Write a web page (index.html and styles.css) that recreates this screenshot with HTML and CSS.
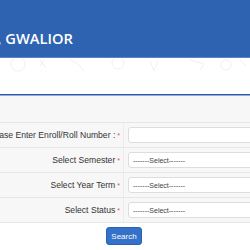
FILE: index.html
```html
<!DOCTYPE html>
<html lang="en">
<head>
    <meta charset="UTF-8">
    <meta name="viewport" content="width=device-width, initial-scale=1.0">
    <title>Result</title>
    <link rel="stylesheet" href="styles.css">
</head>
<body>
    <div class="header">
        <div class="title"><span>JIWAJI UNIVERSITY, GWALIOR</span></div>
    </div>
    <div class="doodles">
        <svg width="250" height="20" viewBox="0 0 250 20">
            <g fill="none" stroke="#f0f0f0" stroke-width="1">
                <circle cx="18" cy="6" r="7"/>
                <path d="M40 2 l6 8 M44 2 l-4 6"/>
                <path d="M70 1 q8 4 14 12"/>
                <circle cx="118" cy="5" r="6"/>
                <path d="M150 3 l4 10 l4 -10"/>
                <path d="M190 2 l14 4 l-4 6"/>
                <circle cx="226" cy="7" r="5"/>
                <path d="M240 2 l6 6"/>
            </g>
        </svg>
    </div>
    <div class="rule"></div>
    <form class="panel">
        <div class="panel-head"></div>
        <div class="row">
            <div class="label"><span>Please Enter Enroll/Roll Number :</span><i>*</i></div>
            <div class="field"><input type="text" class="box"></div>
        </div>
        <div class="row">
            <div class="label"><span>Select Semester</span><i>*</i></div>
            <div class="field"><div class="box">-------Select-------</div></div>
        </div>
        <div class="row">
            <div class="label"><span>Select Year Term</span><i>*</i></div>
            <div class="field"><div class="box">-------Select-------</div></div>
        </div>
        <div class="row">
            <div class="label"><span>Select Status</span><i>*</i></div>
            <div class="field"><div class="box">-------Select-------</div></div>
        </div>
        <div class="actions">
            <button type="button">Search</button>
        </div>
    </form>
</body>
</html>
```

FILE: styles.css
```css
body {
    margin: 0;
    padding: 0;
    font-family: "Liberation Sans", Arial, sans-serif;
    background-color: #fff;
    overflow: hidden;
}

.header {
    height: 57px;
    background-color: #2e63b2;
    border-bottom: 1px solid #5a86c8;
    display: flex;
    align-items: center;
}

.title {
    width: 73px;
    display: flex;
    justify-content: flex-end;
    overflow: hidden;
    white-space: nowrap;
    color: #fff;
    font-family: "Open Sans", sans-serif;
    font-weight: 600;
    font-size: 14.7px;
    padding-top: 18px;
}

.doodles {
    height: 20px;
}

.doodles svg {
    display: block;
}

.rule {
    margin-top: 16px;
    height: 1px;
    background-color: #2a59a6;
    border-bottom: 1px solid #8fb0de;
}

.panel {
    margin: 0;
    background-color: #f7f7f7;
}

.panel-head {
    height: 26px;
    border-bottom: 1px solid #e6e6e6;
}

.row {
    display: grid;
    grid-template-columns: 124px 1fr;
    height: 24px;
    border-bottom: 1px solid #e6e6e6;
}

.label {
    display: flex;
    justify-content: flex-end;
    align-items: center;
    white-space: nowrap;
    font-size: 8.6px;
    color: #333;
    padding-right: 3px;
    border-right: 1px solid #ececec;
}

.label i {
    font-style: normal;
    color: #e05050;
    font-size: 7px;
    margin-left: 2px;
}

.field {
    display: flex;
    align-items: center;
    padding-left: 4px;
}

.box {
    box-sizing: border-box;
    width: 140px;
    height: 16px;
    margin: 0;
    border: 1px solid #ddd;
    border-radius: 3px;
    background-color: #fff;
    font-size: 7px;
    color: #444;
    padding: 0 0 0 4px;
    display: flex;
    align-items: center;
}

.actions {
    background-color: #fff;
    display: flex;
    justify-content: center;
    padding: 4px 0 10px 0;
}

.actions button {
    background-color: #3471c9;
    color: #fff;
    border: 1px solid #2c62b0;
    border-radius: 3px;
    font-family: "Liberation Sans", Arial, sans-serif;
    font-size: 8px;
    width: 36px;
    height: 18px;
    padding: 0;
    margin-left: -2px;
}
```
